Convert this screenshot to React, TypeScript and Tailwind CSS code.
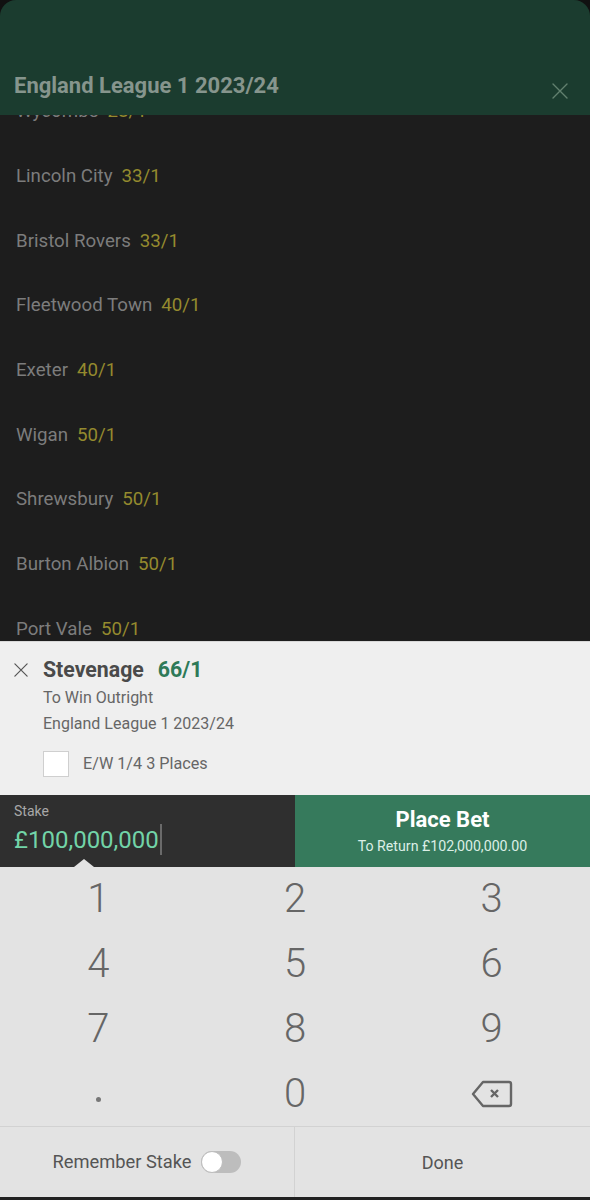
import React from "react";

const rows: [string, string][] = [
  ["Wycombe", "28/1"],
  ["Lincoln City", "33/1"],
  ["Bristol Rovers", "33/1"],
  ["Fleetwood Town", "40/1"],
  ["Exeter", "40/1"],
  ["Wigan", "50/1"],
  ["Shrewsbury", "50/1"],
  ["Burton Albion", "50/1"],
  ["Port Vale", "50/1"],
];

const keys = ["1", "2", "3", "4", "5", "6", "7", "8", "9", ".", "0", "del"];

function X({ size, color, sw = 1.6 }: { size: number; color: string; sw?: number }) {
  return (
    <svg width={size} height={size} viewBox="0 0 16 16" fill="none">
      <path d="M1 1L15 15M15 1L1 15" stroke={color} strokeWidth={sw} strokeLinecap="round" />
    </svg>
  );
}

export default function App() {
  return (
    <div className="w-[590px] h-[1200px] bg-[#111] overflow-hidden flex flex-col" style={{ fontFamily: "Roboto, 'Liberation Sans', sans-serif" }}>
      <div className="flex flex-col flex-1 rounded-t-[16px] overflow-hidden">
        {/* header */}
        <div className="h-[115px] bg-[#1b3c2f] flex items-end justify-between pl-[14px] pr-[22px] pb-[16px] shrink-0 relative z-10">
          <div className="text-[22px] font-bold text-[#86958d] leading-none mb-[2px]">England League 1 2023/24</div>
          <div><X size={16} color="#62806f" sw={1.4} /></div>
        </div>
        {/* list */}
        <div className="h-[526px] bg-[#1d1d1d] overflow-hidden shrink-0">
          <div className="-mt-[36px]">
            {rows.map(([n, o]) => (
              <div key={n} className="h-[64.7px] flex items-center pl-[16px] text-[18.7px]">
                <span className="text-[#7c7c7c]">{n}</span>
                <span className="ml-[9px] text-[#948a2e]">{o}</span>
              </div>
            ))}
          </div>
        </div>
        {/* bet slip */}
        <div className="h-[154px] bg-[#efefef] border-t border-[#d8d8d8] shrink-0 flex">
          <div className="w-[43px] pt-[21px] pl-[14px]">
            <X size={14} color="#555" sw={1.4} />
          </div>
          <div className="flex flex-col">
            <div className="flex items-baseline mt-[17px] leading-none">
              <span className="text-[21.3px] font-bold text-[#4a4a4a]">Stevenage</span>
              <span className="ml-[14px] text-[21.3px] font-bold text-[#2e7a58]">66/1</span>
            </div>
            <div className="text-[16px] text-[#666] mt-[10px] leading-none">To Win Outright</div>
            <div className="text-[16px] text-[#666] mt-[10px] leading-none">England League 1 2023/24</div>
            <div className="flex items-center mt-[19px]">
              <div className="w-[26px] h-[26px] bg-white border border-[#cfcfcf]" />
              <span className="ml-[14px] text-[16.2px] text-[#666]">E/W 1/4 3 Places</span>
            </div>
          </div>
        </div>
        {/* stake row */}
        <div className="h-[72px] flex shrink-0">
          <div className="w-[295px] bg-[#2f2f2f] relative pl-[14px] pt-[9px]">
            <div className="text-[14px] text-[#a8a8a8] leading-none">Stake</div>
            <div className="flex items-center mt-[6px]">
              <span className="text-[24px] text-[#72d4a8] leading-none">£100,000,000</span>
              <span className="w-[2px] h-[31px] bg-[#6a6a6a] ml-[1px]" />
            </div>
            <div className="absolute bottom-0 left-[74px] w-0 h-0 border-l-[10px] border-r-[10px] border-b-[8px] border-l-transparent border-r-transparent border-b-[#e3e3e3]" />
          </div>
          <div className="flex-1 bg-[#367a5c] flex flex-col items-center justify-center">
            <div className="text-[22px] font-bold text-white leading-none">Place Bet</div>
            <div className="text-[14.2px] text-[#dcefe6] leading-none mt-[8px]">To Return £102,000,000.00</div>
          </div>
        </div>
        {/* keypad */}
        <div className="h-[259px] bg-[#e3e3e3] grid grid-cols-3 grid-rows-4 shrink-0">
          {keys.map((k) => (
            <div key={k} className="flex items-center justify-center text-[40px] text-[#666] font-light leading-none">
              {k === "del" ? (
                <svg width="42" height="28" viewBox="0 0 42 28" fill="none">
                  <path d="M12 2H38C39.1 2 40 2.9 40 4V24C40 25.1 39.1 26 38 26H12L2 14Z" stroke="#666" strokeWidth="2.4" strokeLinejoin="round" />
                  <path d="M20 10L27 17M27 10L20 17" stroke="#666" strokeWidth="2.4" />
                </svg>
              ) : k === "." ? (
                <div className="w-[5px] h-[5px] rounded-full bg-[#777] mt-[12px]" />
              ) : (
                k
              )}
            </div>
          ))}
        </div>
        {/* bottom */}
        <div className="h-[71px] bg-[#e3e3e3] border-t border-[#d2d2d2] flex shrink-0">
          <div className="w-[295px] border-r border-[#d2d2d2] flex items-center justify-center">
            <span className="text-[18.3px] text-[#555]">Remember Stake</span>
            <div className="ml-[10px] w-[40px] h-[22px] rounded-full bg-[#bdbdbd] relative">
              <div className="absolute left-0 top-0 w-[22px] h-[22px] rounded-full bg-white border border-[#bdbdbd]" />
            </div>
          </div>
          <div className="flex-1 flex items-center justify-center text-[18px] text-[#555]">Done</div>
        </div>
        <div className="h-[3px] bg-[#222] shrink-0" />
      </div>
    </div>
  );
}
